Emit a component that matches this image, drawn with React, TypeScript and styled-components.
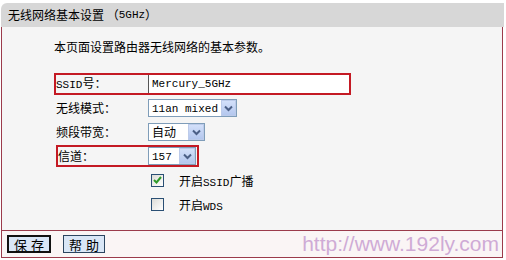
import React from 'react';
import styled, { createGlobalStyle } from 'styled-components';

const colors = {
  frame: '#9b3b4b',
  highlight: '#c41a24',
  header: '#d7d7d7',
  body: '#f5f5f5',
  footer: '#faf5f5',
  field: '#7f9db9',
};

const GlobalStyle = createGlobalStyle`
  body {
    margin: 0;
    background: #fff;
    font-family: "Noto Sans CJK SC", "Liberation Sans", sans-serif;
    font-size: 12px;
    color: #000;
  }
`;

const Frame = styled.div`
  width: 502px;
  margin: 3px 0 0 1px;
`;

const Header = styled.div`
  height: 24px;
  margin-right: -1px;
  padding-left: 7px;
  display: flex;
  align-items: center;
  background: ${colors.header};
  border-top-left-radius: 6px;
  font-size: 12px;
  line-height: 14px;
`;

const Body = styled.div`
  box-sizing: border-box;
  height: 203px;
  padding: 13px 0 0 52px;
  background: ${colors.body};
  border-left: 1px solid ${colors.frame};
  border-right: 1px solid ${colors.frame};
`;

const Intro = styled.div`
  line-height: 14px;
`;

const Form = styled.div`
  margin-top: 19px;
  display: flex;
  flex-direction: column;
  gap: 2px;
`;

const Row = styled.div<{ $marked?: boolean; $width?: number; $shift?: number }>`
  box-sizing: border-box;
  height: 22px;
  width: ${(p) => (p.$width ? `${p.$width}px` : 'auto')};
  margin-left: ${(p) => p.$shift || 0}px;
  display: flex;
  align-items: center;
  border: 2px solid ${(p) => (p.$marked ? colors.highlight : 'transparent')};
`;

const Label = styled.div<{ $width?: number }>`
  width: ${(p) => p.$width || 92}px;
  flex-shrink: 0;
  line-height: 14px;
`;

const Mono = styled.span`
  font-family: "Liberation Mono", "DejaVu Sans Mono", monospace;
  font-size: 11px;
`;

const TextField = styled.div`
  align-self: stretch;
  flex: 1;
  display: flex;
  align-items: center;
  padding-left: 3px;
  background: #fff;
  border-left: 1px solid #555;
`;

const Select = styled.div<{ $width: number }>`
  box-sizing: border-box;
  width: ${(p) => p.$width}px;
  height: 18px;
  display: flex;
  align-items: center;
  background: #fff;
  border: 1px solid ${colors.field};
`;

const SelectValue = styled.div`
  flex: 1;
  padding-left: 3px;
  line-height: 14px;
  white-space: nowrap;
`;

const DropButton = styled.div`
  box-sizing: border-box;
  width: 16px;
  height: 16px;
  margin-left: 3px;
  display: flex;
  align-items: center;
  justify-content: center;
  background: linear-gradient(#d3e0fa, #b4c7ee);
  border: 1px solid #bccbea;
`;

const CheckRow = styled.div`
  height: 22px;
  display: flex;
  align-items: center;
  padding-left: 97px;
  gap: 15px;
`;

const Box = styled.div`
  box-sizing: border-box;
  width: 13px;
  height: 13px;
  display: flex;
  align-items: center;
  justify-content: center;
  background: linear-gradient(135deg, #dcdcd7, #fff);
  border: 1px solid #2a4f74;
`;

const Footer = styled.div`
  box-sizing: border-box;
  height: 28px;
  padding: 0 3px 0 5px;
  display: flex;
  align-items: center;
  gap: 12px;
  background: ${colors.footer};
  border: 1px solid ${colors.frame};
`;

const Button = styled.button<{ $primary?: boolean }>`
  box-sizing: border-box;
  height: 18px;
  width: ${(p) => (p.$primary ? 44 : 42)}px;
  padding: 0;
  display: flex;
  align-items: center;
  justify-content: center;
  font-family: "Noto Sans CJK SC", sans-serif;
  font-size: 13px;
  letter-spacing: 4px;
  text-indent: 4px;
  color: #000;
  background: #d9e6f6;
  border: ${(p) => (p.$primary ? '2px solid #111' : '1px solid #2b4560')};
`;

const Watermark = styled.div`
  margin-left: auto;
  font-family: "Liberation Sans", Arial, sans-serif;
  font-size: 21px;
  line-height: 24px;
  color: #cfabd6;
`;

const Chevron = () => (
  <svg width="9" height="7" viewBox="0 0 9 7">
    <path d="M1 1.5 L4.5 5 L8 1.5" fill="none" stroke="#4b5f86" strokeWidth="2" />
  </svg>
);

const Tick = () => (
  <svg width="9" height="8" viewBox="0 0 9 8">
    <path d="M1 4 L3.5 6.5 L8 1" fill="none" stroke="#2f9a2a" strokeWidth="2" />
  </svg>
);

type DropdownProps = { value: React.ReactNode; width: number };

const Dropdown = ({ value, width }: DropdownProps) => (
  <Select $width={width}>
    <SelectValue>{value}</SelectValue>
    <DropButton>
      <Chevron />
    </DropButton>
  </Select>
);

export default function App() {
  return (
    <>
      <GlobalStyle />
      <Frame>
        <Header>
          无线网络基本设置 （<Mono>5GHz</Mono>）
        </Header>
        <Body>
          <Intro>本页面设置路由器无线网络的基本参数。</Intro>
          <Form>
            <Row $marked $width={297}>
              <Label>
                <Mono>SSID</Mono>号：
              </Label>
              <TextField>
                <Mono>Mercury_5GHz</Mono>
              </TextField>
            </Row>
            <Row>
              <Label>无线模式：</Label>
              <Dropdown width={89} value={<Mono>11an mixed</Mono>} />
            </Row>
            <Row>
              <Label>频段带宽：</Label>
              <Dropdown width={57} value="自动" />
            </Row>
            <Row $marked $width={143} $shift={2}>
              <Label $width={90}>信道：</Label>
              <Dropdown width={48} value={<Mono>157</Mono>} />
            </Row>
            <CheckRow>
              <Box>
                <Tick />
              </Box>
              <span>
                开启<Mono>SSID</Mono>广播
              </span>
            </CheckRow>
            <CheckRow>
              <Box />
              <span>
                开启<Mono>WDS</Mono>
              </span>
            </CheckRow>
          </Form>
        </Body>
        <Footer>
          <Button $primary>保存</Button>
          <Button>帮助</Button>
          <Watermark>http://www.192ly.com</Watermark>
        </Footer>
      </Frame>
    </>
  );
}
